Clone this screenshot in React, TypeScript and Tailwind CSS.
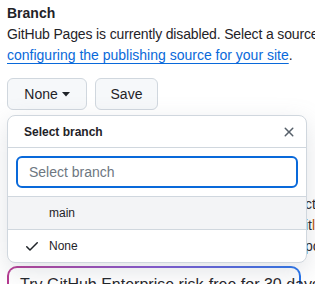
import React from "react";

export default function App() {
  return (
    <div className="relative w-[315px] h-[284px] overflow-hidden bg-white text-[#1f2328] font-['Liberation_Sans',Arial,sans-serif]">
      <div className="pl-[7px] pt-[3px]">
        <div className="text-[14px] font-semibold leading-[20px]">Branch</div>
        <p className="text-[14px] leading-[21px] whitespace-nowrap mt-[1px] tracking-[-0.15px]">
          GitHub Pages is currently disabled. Select a source below to enable
        </p>
        <p className="text-[14px] leading-[21px] whitespace-nowrap">
          <a className="text-[#0969da] underline underline-offset-[3px]">configuring the publishing source for your site</a>.
        </p>
        <div className="flex gap-[8px] mt-[12px]">
          <button className="h-[32px] w-[80px] rounded-[6px] border border-[#d0d7de] bg-[#f6f8fa] text-[14px] font-medium flex items-center justify-center gap-[4px]">
            None
            <svg width="8" height="5" viewBox="0 0 8 5"><path d="M0 0h8L4 4.5z" fill="#1f2328" /></svg>
          </button>
          <button className="h-[32px] w-[63px] rounded-[6px] border border-[#d0d7de] bg-[#f6f8fa] text-[14px] font-medium">
            Save
          </button>
        </div>
        <div className="mt-[84px] pl-[298px] text-[14px] leading-[21px] whitespace-nowrap">
          <div>ct a</div>
          <div>it<span className="text-[#bc4c00]">l</span>b</div>
          <div>pc</div>
        </div>
        <div className="mt-[9px] w-[294px] h-[40px] rounded-[10px] border-2 border-transparent [background:linear-gradient(white,white)_padding-box,linear-gradient(90deg,#b5378f,#7f4fd0_50%,#1f6feb)_border-box] pl-[11px] pt-[7px] text-[16px] leading-[20px] whitespace-nowrap">
          Try GitHub Enterprise risk-free for 30 days
        </div>
      </div>

      <div className="absolute left-[7px] top-[115px] w-[300px] rounded-[8px] border border-[#d0d7de] bg-white shadow-[0_8px_24px_rgba(140,149,159,0.25)] overflow-hidden">
        <div className="flex items-center justify-between h-[32px] pl-[16px] pr-[9px] border-b border-[#d0d7de]">
          <span className="text-[12px] font-semibold">Select branch</span>
          <svg width="16" height="16" viewBox="0 0 16 16" fill="#57606a">
            <path d="M3.72 3.72a.75.75 0 0 1 1.06 0L8 6.94l3.22-3.22a.749.749 0 0 1 1.275.326.749.749 0 0 1-.215.734L9.06 8l3.22 3.22a.749.749 0 0 1-.326 1.275.749.749 0 0 1-.734-.215L8 9.06l-3.22 3.22a.751.751 0 0 1-1.042-.018.751.751 0 0 1-.018-1.042L6.94 8 3.720 4.78a.75.75 0 0 1 0-1.06Z" />
          </svg>
        </div>
        <div className="p-[8px] border-b border-[#d0d7de]">
          <div className="h-[32px] rounded-[6px] border-2 border-[#0969da] flex items-center pl-[11px] text-[14px] text-[#6e7781]">
            Select branch
          </div>
        </div>
        <div className="h-[33px] bg-[#f3f4f6] border-b border-[#d0d7de] flex items-center pl-[41px] text-[12px]">
          main
        </div>
        <div className="h-[32px] flex items-center pl-[16px] text-[12px]">
          <svg width="16" height="16" viewBox="0 0 16 16" fill="#1f2328" className="mr-[9px]">
            <path d="M13.78 4.22a.75.75 0 0 1 0 1.06l-7.25 7.25a.75.75 0 0 1-1.06 0L2.22 9.28a.751.751 0 0 1 .018-1.042.751.751 0 0 1 1.042-.018L6 10.94l6.72-6.72a.75.75 0 0 1 1.06 0Z" />
          </svg>
          None
        </div>
      </div>
    </div>
  );
}
